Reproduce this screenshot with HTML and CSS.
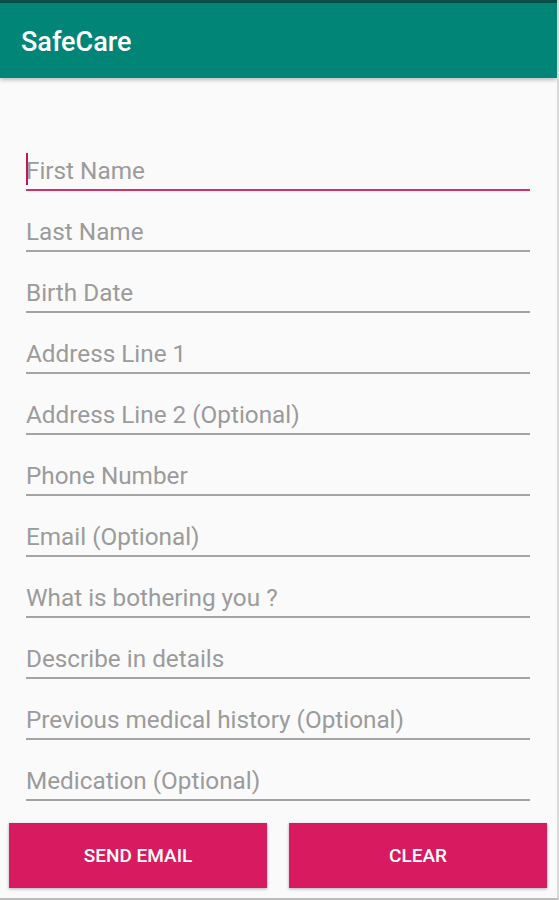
FILE: index.html
```html
<html>
	<head>
		<title>SafeCare</title>
		<link rel="stylesheet" href="styles.css">
	</head>
	<body>
		<div class="status"></div>
		<div class="toolbar">SafeCare</div>
		<div id="form">
			<div class="field focused"><span class="caret"></span>First Name</div>
			<div class="field">Last Name</div>
			<div class="field">Birth Date</div>
			<div class="field">Address Line 1</div>
			<div class="field">Address Line 2 (Optional)</div>
			<div class="field">Phone Number</div>
			<div class="field">Email (Optional)</div>
			<div class="field">What is bothering you ?</div>
			<div class="field">Describe in details</div>
			<div class="field">Previous medical history (Optional)</div>
			<div class="field">Medication (Optional)</div>
		</div>
		<div class="buttons">
			<div class="btn">Send Email</div>
			<div class="btn">Clear</div>
		</div>
	</body>
</html>
```

FILE: styles.css
```css
body	{
	margin: 0;
	width: 557px;
	height: 898px;
	background: #fafafa;
	font-family: Roboto, "Liberation Sans", sans-serif;
	border-right: 2px solid #d8d8d8;
	border-bottom: 2px solid #bdbdbd;
	overflow: hidden;
}
.status	{
	height: 3px;
	background: #0b4f46;
}
.toolbar	{
	height: 72px;
	padding: 3px 0 0 21px;
	display: flex;
	align-items: center;
	font-size: 27px;
	font-weight: 500;
	color: white;
	background: #008577;
	box-shadow: 0 2px 4px rgba(0, 0, 0, .25);
	position: relative;
}
#form	{
	padding: 52px 27px 0 26px;
}
.field	{
	height: 53px;
	padding-bottom: 6px;
	display: flex;
	align-items: flex-end;
	font-size: 24.3px;
	line-height: 1;
	color: #9b9b9b;
	border-bottom: 2px solid #a4a4a4;
	position: relative;
}
.focused	{
	border-bottom-color: #d3306a;
}
.caret	{
	position: absolute;
	left: 0;
	bottom: 4px;
	width: 2px;
	height: 32px;
	background: #c2185b;
}
.buttons	{
	display: flex;
	gap: 22px;
	padding: 22px 10px 0 9px;
}
.btn	{
	flex: 1;
	height: 65px;
	display: flex;
	align-items: center;
	justify-content: center;
	font-size: 19px;
	font-weight: 500;
	text-transform: uppercase;
	color: white;
	background: #d81b60;
	box-shadow: 0 1px 3px rgba(0, 0, 0, .3);
}
```
